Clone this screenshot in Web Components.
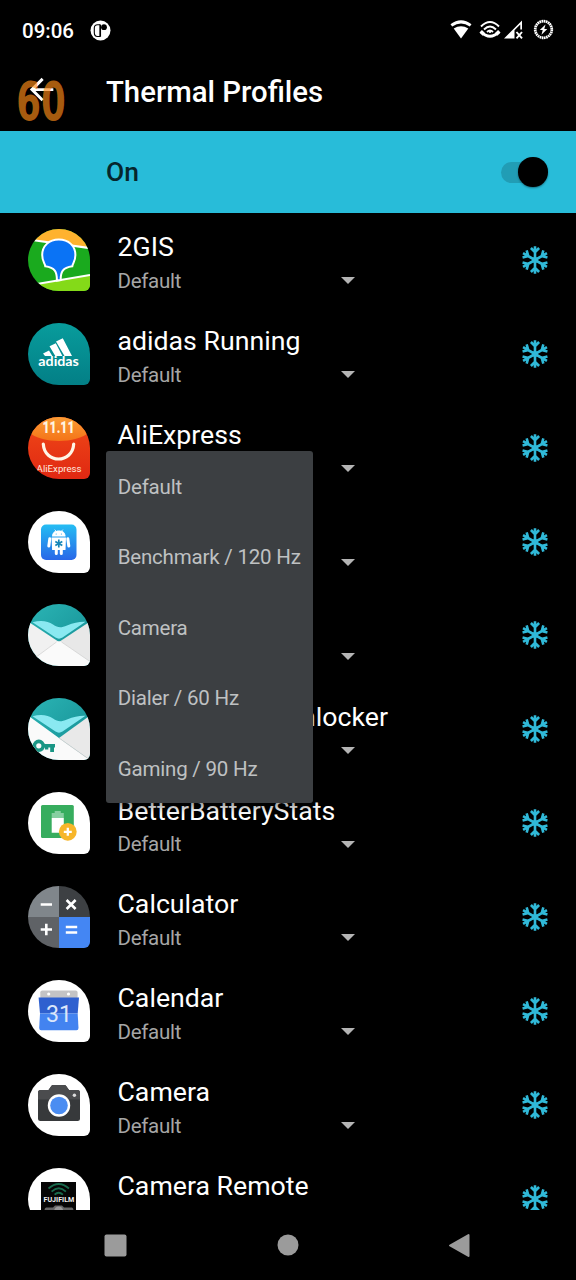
<!DOCTYPE html>
<html lang="en">
<head>
<meta charset="utf-8">
<title>Thermal Profiles</title>
<style>
    html, body {
        margin: 0;
        background: #000;
    }
    body {
        font-family: Roboto, "Liberation Sans", sans-serif;
        color: #fff;
    }
</style>
</head>
<body>
<thermal-screen></thermal-screen>

<script>
const ICONS = {
    gis: `
        <rect width="62" height="62" fill="#1aaa1e"/>
        <path d="M0 0H62V19L8 11.7L0 10Z" fill="#ffb22e"/>
        <path d="M4 11L62 19.2" stroke="#fff" stroke-width="2.2"/>
        <path d="M0 57L62 46V62H0Z" fill="#84da18"/>
        <path d="M0 56.5L62 46" stroke="#fff" stroke-width="2"/>
        <path d="M28.9 51.5C29 43 27 38.5 17.3 37.3C16.8 34 14.2 32 14.2 26C14.2 17 21 10.5 30.8 10.5S47.4 17 47.4 26C47.4 32 44.8 34 44.3 37.3C34.5 38.5 32.6 43 32.7 51Z" fill="#0a73f5" stroke="#fff" stroke-width="2"/>`,
    adidas: `
        <linearGradient id="g" x2="0" y2="1"><stop stop-color="#089c9c"/><stop offset="1" stop-color="#037f86"/></linearGradient>
        <rect width="62" height="62" fill="url(#g)"/>
        <path d="M28 18.5L34.8 15.3L44 33H36.5ZM21.5 23.2L27.8 20.2L34.4 33H27.3ZM15 30.5L21 27.5L24.3 33H17Z" fill="#fff"/>
        <text x="10.3" y="42.5" font-size="12.5" font-weight="700" font-family="Lato, sans-serif" textLength="40.6" lengthAdjust="spacingAndGlyphs" fill="#fff">adidas</text>`,
    ali: `
        <linearGradient id="g" x2="0" y2="1"><stop stop-color="#f04a18"/><stop offset="1" stop-color="#e02812"/></linearGradient>
        <linearGradient id="h" x2="0" y2="1"><stop stop-color="#fb9c35"/><stop offset="1" stop-color="#f47418"/></linearGradient>
        <rect width="62" height="62" fill="url(#g)"/>
        <path d="M0 0H62V15C47 27 15 27 0 15Z" fill="url(#h)"/>
        <text x="14.5" y="15.6" font-size="16" font-weight="900" textLength="32" lengthAdjust="spacingAndGlyphs" fill="#fff4e0">11.11</text>
        <path d="M15.3 27C16.5 47 44.5 47 45.7 27" fill="none" stroke="#fff5e6" stroke-width="3.2" stroke-linecap="round"/>
        <text x="8.6" y="55" font-size="9.6" textLength="45" lengthAdjust="spacingAndGlyphs" fill="#ffe9df">AliExpress</text>`,
    freezer: `
        <linearGradient id="g" x2="0" y2="1"><stop stop-color="#25bdf3"/><stop offset="1" stop-color="#2867e8"/></linearGradient>
        <rect width="62" height="62" fill="#fff"/>
        <rect x="13" y="13.5" width="35.5" height="35.5" rx="5" fill="url(#g)"/>
        <path d="M24.5 25.3C24.5 22 26.5 20.6 28 20L26.7 18.6M37.1 25.3C37.1 22 35.1 20.6 33.6 20L34.9 18.6" stroke="#fff" fill="none" stroke-width=".8"/>
        <path d="M24.3 25.5C24.3 17.5 37.3 17.5 37.3 25.5ZM23.6 26.5H38L37.5 39H34.8V42.5A1.5 1.5 0 0 1 31.8 42.5V39H29.8V42.5A1.5 1.5 0 0 1 26.8 42.5V39H24.1Z" fill="#fff"/>
        <path d="M21.8 27.8L20.8 35M39.8 27.8L40.8 35" stroke="#fff" stroke-width="3" stroke-linecap="round"/>
        <path d="M30.8 28.5V36.5M27.3 30.5L34.3 34.5M34.3 30.5L27.3 34.5" stroke="#1686b8" stroke-width="1.7"/>
        <circle cx="28.2" cy="23" r=".6" fill="#2aa8ef"/><circle cx="33.4" cy="23" r=".6" fill="#2aa8ef"/>`,
    mail: `
        <linearGradient id="g" x2="1" y2="1"><stop stop-color="#2bb5b5"/><stop offset="1" stop-color="#138b91"/></linearGradient>
        <rect width="62" height="62" fill="url(#g)"/>
        <path d="M4.5 18.2C13 16 20 17 25 20.5C30 24 33 24 39 21.5C46 18.5 51 17.5 57.5 17.7L34.5 33.5Q31 35.8 27.5 33.5Z" fill="#8ae9f1"/>
        <path d="M0 17.5L31 38L0 60Z" fill="#f1f1f1"/>
        <path d="M62 17.5L31 38L62 58Z" fill="#e8e8e8"/>
        <path d="M0 59L28.5 38Q31 36.3 33.5 38L62 57.5V62H0Z" fill="#fafafa"/>
        <path d="M0 59L28.5 38M33.5 38L62 57.5" stroke="#cfcfcf" stroke-width=".7"/>`,
    key: `
        <linearGradient id="g" x2="1" y2="1"><stop stop-color="#2bb5b5"/><stop offset="1" stop-color="#138b91"/></linearGradient>
        <rect width="62" height="62" fill="url(#g)"/>
        <path d="M4.5 18.2C13 16 20 17 25 20.5C30 24 33 24 39 21.5C46 18.5 51 17.5 57.5 17.7L34.5 33.5Q31 35.8 27.5 33.5Z" fill="#8ae9f1"/>
        <path d="M0 17.5L31 40L62 62H0Z" fill="#fafafa"/>
        <path d="M62 17.5L31 40L62 62Z" fill="#e9e9e9"/>
        <path d="M31 40L62 62" stroke="#cfcfcf" stroke-width=".8"/>
        <circle cx="10.8" cy="47.8" r="4.4" fill="none" stroke="#1a9685" stroke-width="3.6"/>
        <path d="M15.5 46H27V49.5H26V54H22.2V49.5H20.3V51.5H17V49.5H15.5Z" fill="#1a9685"/>`,
    battery: `
        <rect width="62" height="62" fill="#fff"/>
        <rect x="13" y="13" width="32.8" height="33" rx="1.5" fill="#37ad5e"/>
        <path d="M23.7 21H26.7V19H32.8V21H35.8V26H23.7Z" fill="#86cfa0"/>
        <path d="M23.7 26H35.8V40.7H23.7Z" fill="#fff"/>
        <circle cx="39.8" cy="39.8" r="8.9" fill="#f7b62a"/>
        <path d="M39.8 35.8V43.8M35.8 39.8H43.8" stroke="#fff" stroke-width="2.3"/>`,
    calculator: `
        <path d="M0 0H31V31H0Z" fill="#80868b"/><path d="M31 0H62V31H31Z" fill="#3d4043"/>
        <path d="M0 31H31V62H0Z" fill="#5f6266"/><path d="M31 31H62V62H31Z" fill="#4486f3"/>
        <path d="M12.7 18.5H24M38.6 14L47.6 23M47.6 14L38.6 23M12.7 43.5H24M18.3 37.8V49.2M37.8 41H49.2M37.8 46.5H49.2" stroke="#fff" stroke-width="2.6" fill="none"/>`,
    calendar: `
        <rect width="62" height="62" fill="#fff"/>
        <rect x="12.3" y="10.5" width="37.3" height="10" rx="2" fill="#c3c3c5"/>
        <circle cx="20.7" cy="14" r="1.6" fill="#fff"/><circle cx="40.5" cy="14" r="1.6" fill="#fff"/>
        <path d="M10.6 17.5H51L49.7 33.5H12Z" fill="#2f60cf"/>
        <path d="M12 33.5H49.7L50.5 48Q50.5 50.3 48.5 50.3H13.2Q11.2 50.3 11.2 48Z" fill="#4383f0"/>
        <text x="18" y="42.3" font-size="24" textLength="26" lengthAdjust="spacingAndGlyphs" fill="#dbe6fa">31</text>`,
    camera: `
        <rect width="62" height="62" fill="#fff"/>
        <path d="M12.5 16H20.5L23.5 11.7Q24 11 25 11H36.5Q37.5 11 38 11.7L41 16H49.5Q52 16 52 18.5V44.5Q52 47 49.5 47H12.5Q10 47 10 44.5V18.5Q10 16 12.5 16Z" fill="#37393b"/>
        <path d="M12.5 16H20.5L23.5 11.7Q24 11 25 11H36.5Q37.5 11 38 11.7L41 16H49.5Q52 16 52 18.5V25.5H10V18.5Q10 16 12.5 16Z" fill="#4b4c4e"/>
        <circle cx="31" cy="31.5" r="11.2" fill="#fff"/><circle cx="31" cy="31.5" r="8.8" fill="#4b8df2"/>
        <circle cx="46.4" cy="21.3" r="1.7" fill="#ddd"/>`,
    fuji: `
        <rect width="62" height="62" fill="#fff"/>
        <rect x="13" y="14" width="35" height="35" fill="#050505"/>
        <path d="M20.5 20.5Q30.7 11.5 41 20.5M23.6 23.6Q30.7 17 37.9 23.6M26.6 26.6Q30.7 22.8 34.9 26.6" fill="none" stroke="#186a4c" stroke-width="1.8"/>
        <text x="15.5" y="34" font-size="7" font-weight="700" textLength="30.7" lengthAdjust="spacingAndGlyphs" fill="#f2f2f2">FUJIFILM</text>
        <path d="M18 39.5H25L27 37.5H34L36 39.5H44Q45.5 40 45.5 42V49H16.5V42Q16.5 40 18 39.5Z" fill="#666"/><circle cx="30.7" cy="43" r="4.5" fill="#999"/>`
};

// Icons sit in a teardrop mask: round with one squarer corner
class AppIcon extends HTMLElement {
    constructor() {
        super();
        this.attachShadow({ mode: 'open' });
    }

    connectedCallback() {
        this.shadowRoot.innerHTML = `
            <style>
                :host {
                    display: block;
                    width: 62px;
                    height: 62px;
                    border-radius: 50% 50% 6px 50%;
                    overflow: hidden;
                }
                svg { display: block; }
            </style>
            <svg width="62" height="62" viewBox="0 0 62 62">${ICONS[this.getAttribute('name')]}</svg>
        `;
    }
}
customElements.define('app-icon', AppIcon);


const statusBar = document.createElement('template');
statusBar.innerHTML = `
    <style>
        :host {
            display: flex;
            align-items: center;
            height: 60px;
            padding: 0 22px;
            box-sizing: border-box;
            font-size: 20.5px;
            font-weight: 500;
        }
        .clock { width: 68px; padding-top: 2px; }
        .gap { flex: 1; }
        svg { display: block; }
    </style>
    <span class="clock"><slot></slot></span>
    <svg width="21" height="21" viewBox="0 0 21 21">
        <circle cx="10.5" cy="10.5" r="10" fill="#fff"/>
        <path d="M10 4.8H7.5Q4.3 4.8 4.3 8V12.5Q4.3 16.5 7.5 16.5H10" fill="none" stroke="#000" stroke-width="1.1"/>
        <path d="M10.2 4.5V16.8" stroke="#000" stroke-width="1.7"/>
        <circle cx="14" cy="7.2" r="2.9" fill="#000"/>
    </svg>
    <span class="gap"></span>
    <svg width="104" height="22" viewBox="0 0 104 22" fill="none">
        <path d="M.5 5.3Q11 -2.8 21.5 5.3L19.8 7.6Q11 1.2 2.2 7.6Z" fill="#fff"/>
        <path d="M3.7 9.4Q11 4.9 18.3 9.4L11 19.5Z" fill="#fff"/>
        <path d="M31 7.5Q40 -1.5 49 7.5M34 10.5Q40 4.5 46 10.5M37 13Q40 10 43 13" stroke="#fff" stroke-width="1.9"/>
        <path d="M31 13Q40 21.5 49 13" stroke="#fff" stroke-width="2.8"/>
        <path d="M30.7 12.3L34 15.5M49.3 12.3L46 15.5" stroke="#fff" stroke-width="3.6"/>
        <circle cx="40" cy="12.8" r="1.2" fill="#fff"/>
        <path d="M54 19.5L72 1.5V10.5H70.3V5.5L64.500 11.3V19.5Z" fill="#fff"/>
        <path d="M66.500 13L72 19.3M72 13L66.500 19.3" stroke="#fff" stroke-width="1.900"/>
        <circle cx="93.5" cy="10.5" r="8.3" stroke="#fff" stroke-width="2.7" stroke-dasharray="1.67 .5"/>
        <path d="M95.5 5.5L89.8 11H92.7L91.5 15.8L97.3 10H94.3Z" fill="#fff"/>
    </svg>
`;

class StatusBar extends HTMLElement {
    constructor() {
        super();
        this.attachShadow({ mode: 'open' });
        this.shadowRoot.appendChild(statusBar.content.cloneNode(true));
    }
}
customElements.define('status-bar', StatusBar);


const titleBar = document.createElement('template');
titleBar.innerHTML = `
    <style>
        :host {
            position: relative;
            display: flex;
            align-items: center;
            height: 71px;
            padding: 0 24px;
            box-sizing: border-box;
            font-size: 29.33px;
            font-weight: 500;
        }
        .back {
            display: block;
            width: 82px;
            height: 35px;
            margin-top: -12px;
        }
        h1 {
            margin: -8px 0 0;
            font: inherit;
        }
        /* refresh rate meter floats over everything */
        .fps {
            position: absolute;
            left: 16px;
            top: 12px;
        }
    </style>
    <svg class="back" viewBox="0 0 82 35"><path transform="scale(1.4667)" d="M20 11H7.83l5.59-5.59L12 4l-8 8 8 8 1.41-1.41L7.83 13H20z" fill="#fff"/></svg>
    <h1><slot></slot></h1>
    <svg class="fps" width="52" height="58" viewBox="0 0 52 58">
        <text x=".2" y="47.5" font-family="DejaVu Sans, sans-serif" font-size="53" font-weight="700" textLength="49.5" lengthAdjust="spacingAndGlyphs" fill="#ff8c18" fill-opacity=".66">60</text>
    </svg>
`;

class TitleBar extends HTMLElement {
    constructor() {
        super();
        this.attachShadow({ mode: 'open' });
        this.shadowRoot.appendChild(titleBar.content.cloneNode(true));
    }
}
customElements.define('title-bar', TitleBar);


const switchBar = document.createElement('template');
switchBar.innerHTML = `
    <style>
        :host {
            display: flex;
            align-items: center;
            justify-content: space-between;
            height: 82px;
            padding: 0 28.5px 0 106px;
            box-sizing: border-box;
            background: #28bcd9;
            color: #06262c;
            font-size: 26.4px;
            font-weight: 500;
        }
        .track {
            display: flex;
            align-items: center;
            justify-content: flex-end;
            width: 47px;
            height: 21px;
            border-radius: 11px;
            background: linear-gradient(90deg, #219db5 70%, transparent 70%);
        }
        .thumb {
            width: 29.5px;
            height: 29.5px;
            flex: none;
            border-radius: 50%;
            background: #000;
            box-shadow: 0 1px 2px rgba(0, 0, 0, .4);
        }
    </style>
    <slot></slot>
    <div class="track"><div class="thumb"></div></div>
`;

class SwitchBar extends HTMLElement {
    constructor() {
        super();
        this.attachShadow({ mode: 'open' });
        this.shadowRoot.appendChild(switchBar.content.cloneNode(true));
    }
}
customElements.define('switch-bar', SwitchBar);


const appRow = document.createElement('template');
appRow.innerHTML = `
    <style>
        :host {
            display: flex;
            align-items: center;
            height: 93.87px;
            padding: 0 27px 0 28px;
            box-sizing: border-box;
        }
        .text {
            flex: 1;
            margin: 9px 0 0 27.5px;
        }
        .name {
            height: 33px;
            font-size: 26.7px;
            line-height: 33.5px;
            white-space: nowrap;
        }
        .profile {
            display: flex;
            align-items: center;
            justify-content: space-between;
            width: 237px;
            height: 33px;
            font-size: 20.53px;
            letter-spacing: -.3px;
            color: #a6a6a6;
        }
        .caret {
            width: 0;
            border: 7.3px solid transparent;
            border-top-color: #b4b4b4;
            border-bottom: 0;
        }
        .flake { display: block; }
    </style>
    <slot name="icon"></slot>
    <div class="text">
        <div class="name"><slot></slot></div>
        <div class="profile"><slot name="profile"><span></span></slot><i class="caret"></i></div>
    </div>
    <svg class="flake" width="28" height="28" viewBox="-14 -14 28 28" fill="none" stroke="#30b9d8" stroke-width="2.6">
        <defs><path id="arm" d="M0 0V-13.8M-4.1 -12L0 -7.8L4.1 -12"/></defs>
        <use href="#arm"/>
        <use href="#arm" transform="rotate(60)"/>
        <use href="#arm" transform="rotate(120)"/>
        <use href="#arm" transform="rotate(180)"/>
        <use href="#arm" transform="rotate(240)"/>
        <use href="#arm" transform="rotate(300)"/>
        <circle r="3" fill="#30b9d8" stroke="none"/>
    </svg>
`;

class AppRow extends HTMLElement {
    constructor() {
        super();
        this.attachShadow({ mode: 'open' });
        this.shadowRoot.appendChild(appRow.content.cloneNode(true));
    }
}
customElements.define('app-row', AppRow);


const profileMenu = document.createElement('template');
profileMenu.innerHTML = `
    <style>
        :host {
            position: absolute;
            left: 106px;
            top: 451px;
            width: 206.7px;
            border-radius: 3px;
            background: #3c3f42;
            box-shadow: 0 4px 10px rgba(0, 0, 0, .45);
            font-size: 20.53px;
            letter-spacing: -.2px;
            color: #bfc1c2;
        }
        ::slotted(div) {
            height: 70.4px;
            padding: 1px 11.7px 0;
            box-sizing: border-box;
            line-height: 71.4px;
            white-space: nowrap;
        }
    </style>
    <slot></slot>
`;

class ProfileMenu extends HTMLElement {
    constructor() {
        super();
        this.attachShadow({ mode: 'open' });
        this.shadowRoot.appendChild(profileMenu.content.cloneNode(true));
    }
}
customElements.define('profile-menu', ProfileMenu);


const navBar = document.createElement('template');
navBar.innerHTML = `
    <style>
        :host {
            display: flex;
            align-items: center;
            justify-content: space-between;
            height: 70px;
            padding: 0 105px 0 104px;
            box-sizing: border-box;
        }
        svg { display: block; }
    </style>
    <svg width="23" height="23"><rect x=".5" y=".5" width="22" height="22" rx="2" fill="#9b9b9b"/></svg>
    <svg width="22" height="22"><circle cx="11" cy="11" r="10.5" fill="#9b9b9b"/></svg>
    <svg width="23" height="25"><path d="M2 12.5L20.5 2V23Z" fill="#9b9b9b" stroke="#9b9b9b" stroke-width="2" stroke-linejoin="round"/></svg>
`;

class NavBar extends HTMLElement {
    constructor() {
        super();
        this.attachShadow({ mode: 'open' });
        this.shadowRoot.appendChild(navBar.content.cloneNode(true));
    }
}
customElements.define('nav-bar', NavBar);


const apps = [
    ['gis', '2GIS', 'Default'],
    ['adidas', 'adidas Running', 'Default'],
    ['ali', 'AliExpress', ''],
    ['freezer', '', ''],
    ['mail', '', ''],
    ['key', 'AquaMail Key unlocker', ''],
    ['battery', 'BetterBatteryStats', 'Default'],
    ['calculator', 'Calculator', 'Default'],
    ['calendar', 'Calendar', 'Default'],
    ['camera', 'Camera', 'Default'],
    ['fuji', 'Camera Remote', '']
];

const profiles = ['Default', 'Benchmark / 120 Hz', 'Camera', 'Dialer / 60 Hz', 'Gaming / 90 Hz'];

class ThermalScreen extends HTMLElement {
    constructor() {
        super();
        this.attachShadow({ mode: 'open' });
    }

    connectedCallback() {
        const rows = apps.map(([icon, name, profile]) => `
            <app-row>
                <app-icon slot="icon" name="${icon}"></app-icon>
                ${name}
                <span slot="profile">${profile}</span>
            </app-row>`).join('');

        this.shadowRoot.innerHTML = `
            <style>
                :host {
                    position: relative;
                    display: flex;
                    flex-direction: column;
                    width: 576px;
                    height: 1280px;
                    overflow: hidden;
                    background: #000;
                }
                .list {
                    flex: 1;
                    min-height: 0;
                    overflow: hidden;
                }
            </style>
            <status-bar>09:06</status-bar>
            <title-bar>Thermal Profiles</title-bar>
            <switch-bar>On</switch-bar>
            <div class="list">${rows}</div>
            <nav-bar></nav-bar>
            <profile-menu>${profiles.map(p => `<div>${p}</div>`).join('')}</profile-menu>
        `;
    }
}
customElements.define('thermal-screen', ThermalScreen);
</script>
</body>
</html>
